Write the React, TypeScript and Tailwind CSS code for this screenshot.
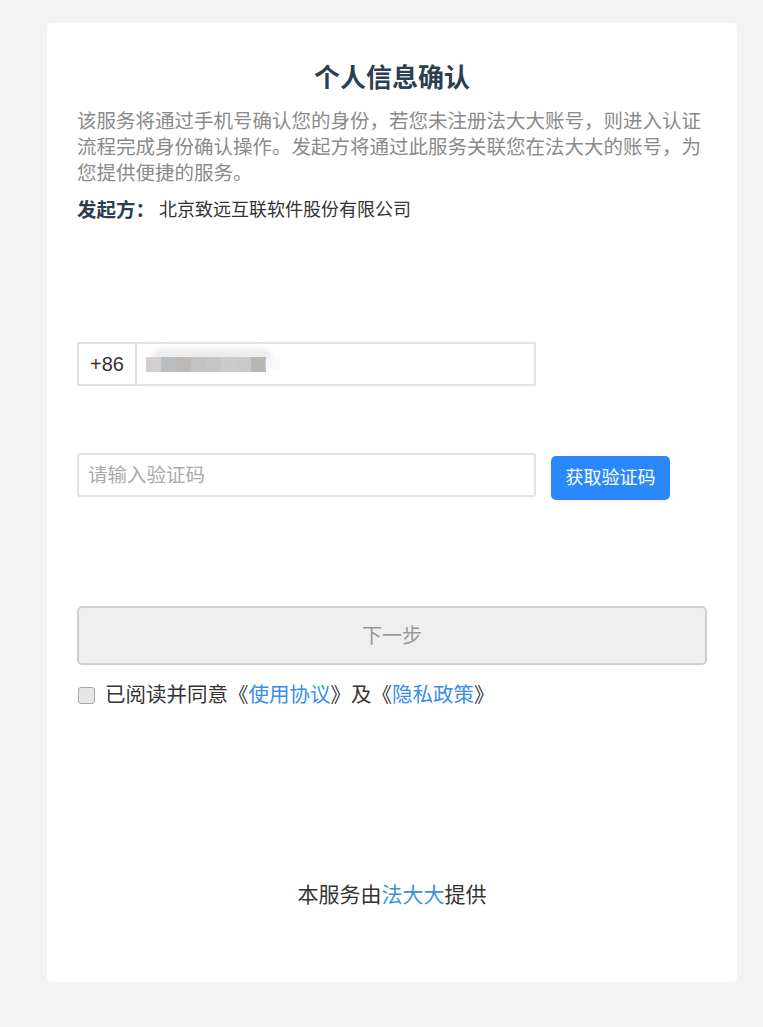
import React, { useState } from 'react';

const FONT = '"Liberation Sans", "Noto Sans CJK SC", sans-serif';

// blurred phone number, drawn as pixel blocks
const blurBlocks = ['#d3cfcf', '#b9bdc0', '#bcb9b6', '#c2c3c4', '#c6c6c6', '#cbcbc9', '#c9c9c7', '#b6b6b4'];

const App: React.FC = () => {
    const [agreed, setAgreed] = useState(false);
    const [code, setCode] = useState('');

    return (
        <div className="min-h-screen bg-[#f3f3f3] pt-[23px] pb-[45px]" style={{ fontFamily: FONT }}>
            <div className="ml-[47px] w-[690px] h-[959px] bg-white rounded-[5px] px-[30px] pt-[38px] flex flex-col">
                <h1 className="text-center text-[26px] leading-[34px] font-bold text-[#2c3e50]">个人信息确认</h1>
                <p className="mt-[13px] text-[19.5px] leading-[26px] text-[#8a8a8a]">
                    该服务将通过手机号确认您的身份，若您未注册法大大账号，则进入认证流程完成身份确认操作。发起方将通过此服务关联您在法大大的账号，为您提供便捷的服务。
                </p>
                <div className="mt-[11px] flex items-center leading-[26px]">
                    <span className="text-[19.5px] font-bold text-[#2c3e50]">发起方：</span>
                    <span className="ml-[4px] text-[18px] text-[#333]">北京致远互联软件股份有限公司</span>
                </div>

                <div className="mt-[119px] flex h-[44px] w-[459px]">
                    <div className="w-[60px] h-full border-2 border-[#e0e0e0] flex items-center justify-center text-[20px] text-[#333]">+86</div>
                    <div className="flex-1 h-full border-2 border-l-0 border-[#e3e3e3] rounded-r-[2px] flex items-center pl-[9px]">
                        <div className="relative flex items-center">
                            <div className="absolute -top-[8px] left-[6px] w-[120px] h-[14px] rounded-full bg-[#ececec] blur-[3px]"></div>
                            <div className="relative flex blur-[0.6px]">
                                {blurBlocks.map((c, i) => (
                                    <div key={i} className="w-[15px] h-[15px]" style={{ backgroundColor: c }}></div>
                                ))}
                            </div>
                            <div className="relative w-[14px] h-[10px] bg-[#f4f8fc] blur-[1px]"></div>
                        </div>
                    </div>
                </div>

                <div className="mt-[67px] flex items-start">
                    <input
                        value={code}
                        onChange={e => setCode(e.target.value)}
                        placeholder="请输入验证码"
                        className="w-[459px] h-[44px] border-2 border-[#e3e3e3] rounded-[3px] px-[9px] text-[19.5px] text-[#333] placeholder:text-[#aaa] outline-none"
                        style={{ fontFamily: FONT }}
                    />
                    <button className="ml-[15px] mt-[3px] w-[119px] h-[44px] rounded-[5px] bg-[#2b88fc] text-white text-[18px]">获取验证码</button>
                </div>

                <button className="mt-[106px] w-full h-[59px] rounded-[5px] bg-[#efefef] border-2 border-[#cfcfcf] text-[20px] text-[#999]">下一步</button>

                <label className="mt-[17px] flex items-center leading-[26px] cursor-pointer" onClick={() => setAgreed(!agreed)}>
                    <span className="ml-[1px] w-[17px] h-[17px] rounded-[3px] border border-[#a8a8a8] bg-[#e6e6e6] flex items-center justify-center text-[12px] text-[#333]">
                        {agreed ? '✓' : ''}
                    </span>
                    <span className="ml-[10px] text-[20.5px] text-[#333]">
                        已阅读并同意《<span className="text-[#3a8ee6]">使用协议</span>》及《<span className="text-[#3a8ee6]">隐私政策</span>》
                    </span>
                </label>

                <div className="mt-[174px] text-center text-[21px] leading-[26px] text-[#333]">
                    本服务由<span className="text-[#3a8ee6]">法大大</span>提供
                </div>
            </div>
        </div>
    );
};

export default App;
